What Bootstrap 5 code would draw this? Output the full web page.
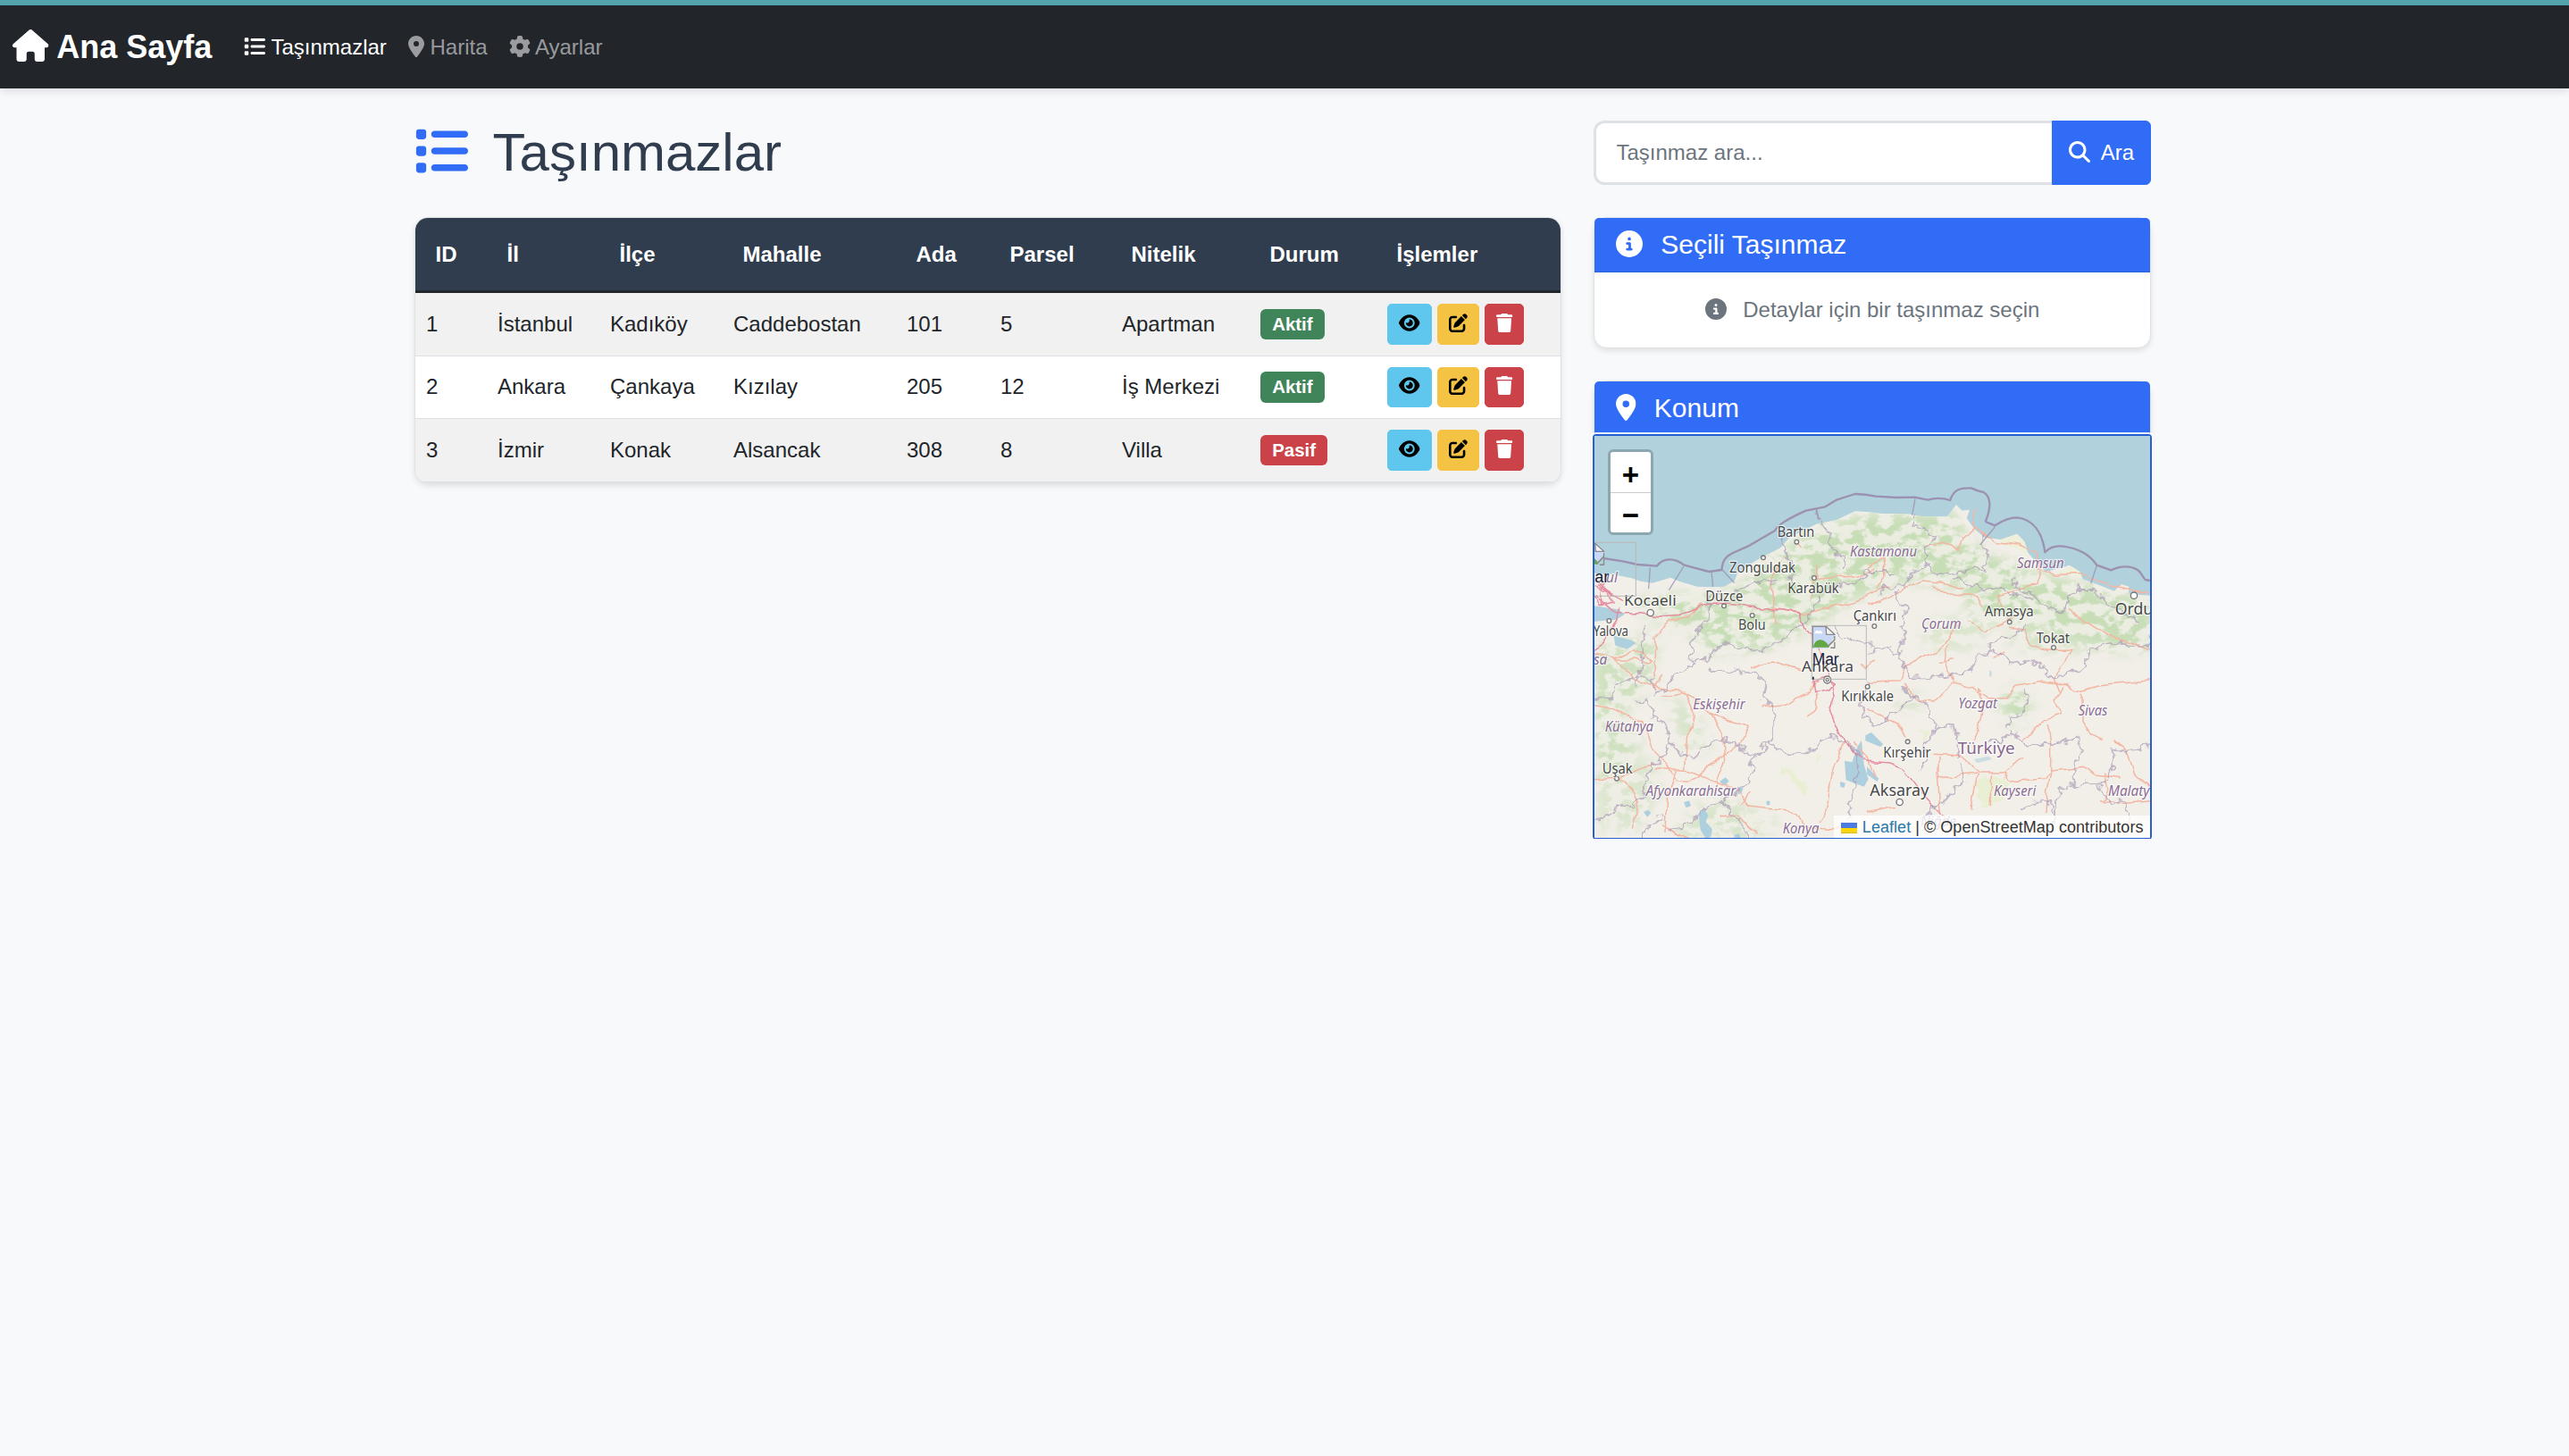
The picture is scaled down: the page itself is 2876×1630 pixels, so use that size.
<!DOCTYPE html>
<html lang="tr">
<head>
<meta charset="utf-8">
<meta name="viewport" content="width=device-width, initial-scale=1">
<title>Taşınmazlar</title>
<link href="https://cdn.jsdelivr.net/npm/bootstrap@5.3.0/dist/css/bootstrap.min.css" rel="stylesheet">
<style>
  html { font-size: 24px; }
  body { font-family: "Liberation Sans", Arial, sans-serif; background: #f8f9fb; border-top: 6px solid #52a5ad; position: relative; }
  body::before { content: ""; position: absolute; top: -2px; left: 0; right: 0; height: 2px; background: #70bcbf; }
  .fa-ico { height: 1em; width: auto; vertical-align: -.125em; fill: currentColor; overflow: visible; }
  .topnav { background: #22252a; box-shadow: 0 3px 9px rgba(40,20,60,.13); padding: 12px 0; }
  .topnav .container-fluid { padding-left: 14px; }
  .topnav .navbar-brand { font-size: 36px; font-weight: 700; margin-right: 24px; }
  .topnav .nav-link { padding: 12px; }
  .page-wrap { max-width: 1980px; padding: 0 18px; margin-left: 446px; margin-right: auto; }
  .page-head { color: #303d4e; font-size: 60px; line-height: 72px; }
  .brand-blue { color: #306cf6; }
  .panel { border: 1px solid #e0e1e3; border-radius: 15px; box-shadow: 0 3px 6px rgba(0,0,0,.1); }
  .panel-head { background: #306cf6; color: #fff; padding: 12px 24px; border-bottom: 1px solid #2a5fd9; border-radius: 5px 5px 0 0 !important; }
  .panel-head h5 { font-size: 30px; line-height: 36px; }
  .panel-note { color: #6c757d; line-height: 36px; }
  .list-panel { overflow: hidden; }
  .estate { --bs-table-striped-bg: #f1f1f1; --bs-table-bg: #fff; table-layout: fixed; color: #212529; }
  .estate th { background: #303d4e; color: #fff; padding: 22.5px; border-bottom: 3px solid #22252a; white-space: nowrap; }
  .estate td { padding: 12px; vertical-align: middle; height: 70.4px; border-bottom: 1px solid #dcdfe5; white-space: nowrap; background: #fff; }
  .estate tr:nth-child(odd) td { background: #f1f1f1; box-shadow: none; }
  .state { font-size: 20.4px; padding: .35em .65em; border-radius: 6px; vertical-align: middle; position: relative; top: -1px; }
  .bg-ok { background: #40855a; } .bg-off { background: #cb4349; }
  .act { font-size: 21px; line-height: 31.5px; padding: 6px 12px; border: 1px solid; border-radius: 5px; }
  .act svg { position: relative; top: -1px; }
  .act-view { background: #5fc7ed; border-color: #5fc7ed; color: #000; }
  .act-edit { background: #f5c344; border-color: #f5c344; color: #000; }
  .act-del { background: #cb4349; border-color: #cb4349; color: #fff; }
  .find-box { border: 3px solid #dee2e6; border-radius: 12px; padding: 15px 22.5px; line-height: 36px; height: 72px; border-right: 0; }
  .find-box::placeholder { color: #6c757d; }
  .find-btn { background: #306cf6; color: #fff; border: 1px solid #306cf6; padding: 0 18px; border-radius: 6px; }
  .map-view { height: 450px; position: relative; z-index: 1; border-radius: 2px; box-shadow: 0 0 0 2px #255fd0, 0 0 0 4px rgba(255,255,255,.9); }
  .map-view > svg { width: 100%; height: 100%; display: block; }
  .zoom-ctl { position: absolute; left: 15px; top: 15px; width: 51px; border: 3px solid rgba(0,0,0,.2); border-radius: 6px; background-clip: padding-box; }
  .zoom-ctl a { display: block; height: 45px; background: #fff; color: #000; text-decoration: none; text-align: center; font: bold 33px/51px "Liberation Sans", sans-serif; border-radius: 3px 3px 0 0; background-clip: padding-box; }
  .zoom-ctl a:last-child { border-radius: 0 0 3px 3px; border-top: 1px solid #ccc; line-height: 49px; }
  .map-credit { position: absolute; right: 0; bottom: 0; height: 25px; padding: 0 7.5px; font-size: 18px; line-height: 26px; letter-spacing: .04px; background: rgba(255,255,255,.8); color: #333; white-space: nowrap; }
  .map-credit a { color: #2a78a8; text-decoration: none; }
  .map-credit svg { width: 18px; height: 12px; margin-right: 6px; vertical-align: -1px; }
  .lb text { font-family: "Noto Sans", "Open Sans", sans-serif; fill: #484848; stroke: #fff; stroke-opacity: .7; stroke-width: 7; stroke-linejoin: round; paint-order: stroke; }
  .lb .pv { font-style: italic; fill: #8a6d94; }
  .rd { fill: none; stroke: #f3b6a2; stroke-width: 4.5; stroke-linejoin: round; }
  .mw { fill: none; stroke: #e58c9e; stroke-width: 4.5; stroke-linejoin: round; }
  .bd { fill: none; stroke: #a999b5; stroke-opacity: .68; stroke-width: 5.5; stroke-linejoin: round; }
  .sb { fill: none; stroke: #9c91b1; stroke-width: 7; stroke-linejoin: round; }
  .sd { fill: none; stroke: #9c91b1; stroke-width: 4; opacity: .8; }
  .lk { fill: #aed0de; }
  .tn circle { fill: #fff; stroke: #777; stroke-width: 4; }
</style>
<script src="https://cdn.jsdelivr.net/npm/bootstrap@5.3.0/dist/js/bootstrap.bundle.min.js"></script>
</head>
<body>
<svg width="0" height="0" class="position-absolute" aria-hidden="true">
  <symbol id="i-home" viewBox="0 0 576 512"><path d="M575.8 255.5c0 18-15 32.1-32 32.1h-32l.7 160.2c0 2.7-.2 5.4-.5 8.1V472c0 22.1-17.9 40-40 40H456c-1.100 0-2.200 0-3.300-.1c-1.400 .1-2.800 .1-4.200 .1H416 392c-22.100 0-40-17.900-40-40V448 384c0-17.700-14.300-32-32-32H256c-17.700 0-32 14.300-32 32v64 24c0 22.100-17.900 40-40 40H160 128.100c-1.500 0-3-.1-4.500-.2c-1.200 .1-2.400 .2-3.600 .2H104c-22.100 0-40-17.900-40-40V360c0-.9 0-1.900 .1-2.800V287.600H32c-18 0-32-14-32-32.100c0-9 3-17 10-24L266.400 8c7-7 15-8 22-8s15 2 21 7L564.800 231.500c8 7 12 15 11 24z"/></symbol>
  <symbol id="i-list" viewBox="0 0 512 512"><path d="M40 48C26.700 48 16 58.700 16 72v48c0 13.300 10.700 24 24 24H88c13.300 0 24-10.700 24-24V72c0-13.300-10.700-24-24-24H40zM192 64c-17.700 0-32 14.300-32 32s14.300 32 32 32H480c17.700 0 32-14.300 32-32s-14.300-32-32-32H192zm0 160c-17.700 0-32 14.300-32 32s14.300 32 32 32H480c17.700 0 32-14.300 32-32s-14.300-32-32-32H192zm0 160c-17.700 0-32 14.300-32 32s14.300 32 32 32H480c17.700 0 32-14.300 32-32s-14.300-32-32-32H192zM16 232v48c0 13.300 10.700 24 24 24H88c13.300 0 24-10.700 24-24V232c0-13.300-10.700-24-24-24H40c-13.300 0-24 10.700-24 24zM40 368c-13.300 0-24 10.700-24 24v48c0 13.300 10.700 24 24 24H88c13.300 0 24-10.700 24-24V392c0-13.300-10.700-24-24-24H40z"/></symbol>
  <symbol id="i-pin" viewBox="0 0 384 512"><path d="M215.700 499.200C267 435 384 279.400 384 192C384 86 298 0 192 0S0 86 0 192c0 87.400 117 243 168.300 307.200c12.300 15.300 35.100 15.300 47.400 0zM192 128a64 64 0 1 1 0 128 64 64 0 1 1 0-128z"/></symbol>
  <symbol id="i-gear" viewBox="0 0 512 512"><path d="M495.900 166.600c3.200 8.700 .5 18.400-6.400 24.600l-43.300 39.400c1.100 8.300 1.700 16.800 1.700 25.400s-.6 17.100-1.700 25.400l43.300 39.400c6.900 6.200 9.600 15.900 6.400 24.600c-4.400 11.900-9.700 23.300-15.800 34.300l-4.700 8.100c-6.600 11-14 21.400-22.100 31.200c-5.900 7.200-15.700 9.600-24.500 6.800l-55.700-17.700c-13.400 10.300-28.200 18.900-44 25.400l-12.500 57.100c-2 9.100-9 16.300-18.200 17.800c-13.800 2.300-28 3.500-42.500 3.500s-28.700-1.200-42.500-3.500c-9.200-1.500-16.200-8.700-18.200-17.800l-12.500-57.100c-15.800-6.500-30.600-15.100-44-25.400L83.100 425.900c-8.800 2.800-18.600 .3-24.500-6.800c-8.100-9.800-15.500-20.200-22.100-31.200l-4.700-8.100c-6.100-11-11.400-22.400-15.800-34.300c-3.200-8.700-.5-18.400 6.400-24.600l43.300-39.400C64.600 273.100 64 264.600 64 256s.6-17.100 1.700-25.400L22.400 191.200c-6.900-6.200-9.600-15.900-6.400-24.600c4.400-11.900 9.700-23.300 15.800-34.300l4.700-8.100c6.600-11 14-21.400 22.100-31.200c5.900-7.200 15.700-9.600 24.500-6.800l55.700 17.700c13.400-10.300 28.200-18.900 44-25.400l12.500-57.100c2-9.100 9-16.300 18.200-17.800C227.300 1.200 241.500 0 256 0s28.700 1.200 42.500 3.500c9.200 1.500 16.200 8.700 18.200 17.800l12.500 57.100c15.800 6.500 30.600 15.100 44 25.400l55.700-17.700c8.800-2.800 18.600-.3 24.500 6.800c8.100 9.800 15.500 20.200 22.100 31.200l4.700 8.100c6.100 11 11.400 22.400 15.800 34.300zM256 336a80 80 0 1 0 0-160 80 80 0 1 0 0 160z"/></symbol>
  <symbol id="i-find" viewBox="0 0 512 512"><path d="M416 208c0 45.900-14.900 88.300-40 122.700L502.600 457.400c12.500 12.500 12.500 32.800 0 45.300s-32.800 12.500-45.300 0L330.700 376c-34.400 25.200-76.800 40-122.700 40C93.100 416 0 322.900 0 208S93.100 0 208 0S416 93.100 416 208zM208 352a144 144 0 1 0 0-288 144 144 0 1 0 0 288z"/></symbol>
  <symbol id="i-info" viewBox="0 0 512 512"><path d="M256 512A256 256 0 1 0 256 0a256 256 0 1 0 0 512zM216 336h24V272H216c-13.300 0-24-10.700-24-24s10.700-24 24-24h48c13.300 0 24 10.700 24 24v88h8c13.300 0 24 10.700 24 24s-10.700 24-24 24H216c-13.300 0-24-10.700-24-24s10.700-24 24-24zm40-208a32 32 0 1 1 0 64 32 32 0 1 1 0-64z"/></symbol>
  <symbol id="i-eye" viewBox="0 0 576 512"><path d="M288 32c-80.800 0-145.500 36.800-192.600 80.600C48.600 156 17.300 208 2.500 243.700c-3.300 7.900-3.300 16.700 0 24.600C17.300 304 48.600 356 95.400 399.400C142.500 443.200 207.200 480 288 480s145.500-36.800 192.600-80.600c46.800-43.500 78.100-95.400 93-131.100c3.300-7.900 3.300-16.700 0-24.600c-14.900-35.700-46.200-87.700-93-131.100C433.500 68.800 368.800 32 288 32zM144 256a144 144 0 1 1 288 0 144 144 0 1 1 -288 0zm144-64c0 35.300-28.700 64-64 64c-7.100 0-13.900-1.200-20.300-3.300c-5.500-1.800-11.900 1.600-11.700 7.400c.3 6.900 1.300 13.800 3.200 20.700c13.700 51.200 66.400 81.600 117.600 67.900s81.600-66.400 67.900-117.600c-11.100-41.500-47.800-69.400-88.600-71.100c-5.800-.2-9.200 6.100-7.400 11.700c2.100 6.400 3.300 13.200 3.300 20.300z"/></symbol>
  <symbol id="i-edit" viewBox="0 0 512 512"><path d="M471.600 21.700c-21.900-21.900-57.300-21.900-79.200 0L362.300 51.700l97.900 97.900 30.100-30.100c21.900-21.900 21.900-57.300 0-79.200L471.600 21.700zm-299.200 220c-6.100 6.100-10.800 13.600-13.500 21.900l-29.600 88.800c-2.900 8.600-.6 18.100 5.800 24.600s15.900 8.700 24.600 5.800l88.800-29.600c8.200-2.700 15.700-7.400 21.900-13.500L437.700 172.300 339.700 74.300 172.400 241.700zM96 64C43 64 0 107 0 160V416c0 53 43 96 96 96H352c53 0 96-43 96-96V320c0-17.700-14.300-32-32-32s-32 14.300-32 32v96c0 17.700-14.300 32-32 32H96c-17.700 0-32-14.300-32-32V160c0-17.700 14.300-32 32-32h96c17.700 0 32-14.300 32-32s-14.300-32-32-32H96z"/></symbol>
  <symbol id="i-trash" viewBox="0 0 448 512"><path d="M135.200 17.700L128 32H32C14.300 32 0 46.300 0 64S14.300 96 32 96H416c17.700 0 32-14.300 32-32s-14.300-32-32-32H320l-7.200-14.300C307.400 6.800 296.300 0 284.200 0H163.800c-12.100 0-23.200 6.800-28.600 17.700zM416 128H32L53.200 467c1.600 25.300 22.600 45 47.900 45H346.900c25.300 0 46.300-19.700 47.900-45L416 128z"/></symbol>
  <symbol id="i-broken" viewBox="0 0 78 76"><path d="M1 1h48l28 28v10L66 47v6L54 75H1z" fill="#c9d8f5"/><path d="M2 74V2h46v26h28" fill="none" stroke="#8a8a8a" stroke-width="4"/><path d="M46 2l30 27H48z" fill="#f4f4f4" stroke="#8a8a8a" stroke-width="4"/><path d="M8 26c0-12 12-12 14-8 8-5 12 2 12 8z" fill="#fff"/><path d="M4 72c5-34 40-34 54 0z" fill="#62a744"/><path d="M76 34v12l-22 22M76 54v20H62" fill="none" stroke="#8a8a8a" stroke-width="5"/></symbol>
</svg>

<nav class="navbar navbar-expand navbar-dark topnav">
  <div class="container-fluid">
    <a class="navbar-brand" href="#"><svg class="fa-ico" viewBox="0 0 576 512"><use href="#i-home"/></svg> Ana Sayfa</a>
    <ul class="navbar-nav me-auto">
      <li class="nav-item"><a class="nav-link active" href="#"><svg class="fa-ico" viewBox="0 0 512 512"><use href="#i-list"/></svg> Taşınmazlar</a></li>
      <li class="nav-item"><a class="nav-link" href="#"><svg class="fa-ico" viewBox="0 0 384 512"><use href="#i-pin"/></svg> Harita</a></li>
      <li class="nav-item"><a class="nav-link" href="#"><svg class="fa-ico" viewBox="0 0 512 512"><use href="#i-gear"/></svg> Ayarlar</a></li>
    </ul>
  </div>
</nav>

<main class="page-wrap mt-4">
  <div class="row mb-4">
    <div class="col-8">
      <h1 class="page-head mb-0"><svg class="fa-ico brand-blue me-2" viewBox="0 0 512 512"><use href="#i-list"/></svg> Taşınmazlar</h1>
    </div>
    <div class="col-4">
      <div class="input-group">
        <input type="text" class="form-control find-box" placeholder="Taşınmaz ara...">
        <button class="btn find-btn" type="button"><svg class="fa-ico me-1" viewBox="0 0 512 512"><use href="#i-find"/></svg> Ara</button>
      </div>
    </div>
  </div>

  <div class="row">
    <div class="col-8">
      <div class="card panel list-panel">
        <table class="table table-striped estate mb-0">
          <colgroup><col style="width:80px"><col style="width:126px"><col style="width:138px"><col style="width:194px"><col style="width:105px"><col style="width:136px"><col style="width:155px"><col style="width:142px"><col></colgroup>
          <thead>
            <tr><th>ID</th><th>İl</th><th>İlçe</th><th>Mahalle</th><th>Ada</th><th>Parsel</th><th>Nitelik</th><th>Durum</th><th>İşlemler</th></tr>
          </thead>
          <tbody>
            <tr>
              <td>1</td><td>İstanbul</td><td>Kadıköy</td><td>Caddebostan</td><td>101</td><td>5</td><td>Apartman</td>
              <td><span class="badge state bg-ok">Aktif</span></td>
              <td><div class="d-flex gap-1"><button class="btn act act-view"><svg class="fa-ico" viewBox="0 0 576 512"><use href="#i-eye"/></svg></button><button class="btn act act-edit"><svg class="fa-ico" viewBox="0 0 512 512"><use href="#i-edit"/></svg></button><button class="btn act act-del"><svg class="fa-ico" viewBox="0 0 448 512"><use href="#i-trash"/></svg></button></div></td>
            </tr>
            <tr>
              <td>2</td><td>Ankara</td><td>Çankaya</td><td>Kızılay</td><td>205</td><td>12</td><td>İş Merkezi</td>
              <td><span class="badge state bg-ok">Aktif</span></td>
              <td><div class="d-flex gap-1"><button class="btn act act-view"><svg class="fa-ico" viewBox="0 0 576 512"><use href="#i-eye"/></svg></button><button class="btn act act-edit"><svg class="fa-ico" viewBox="0 0 512 512"><use href="#i-edit"/></svg></button><button class="btn act act-del"><svg class="fa-ico" viewBox="0 0 448 512"><use href="#i-trash"/></svg></button></div></td>
            </tr>
            <tr>
              <td>3</td><td>İzmir</td><td>Konak</td><td>Alsancak</td><td>308</td><td>8</td><td>Villa</td>
              <td><span class="badge state bg-off">Pasif</span></td>
              <td><div class="d-flex gap-1"><button class="btn act act-view"><svg class="fa-ico" viewBox="0 0 576 512"><use href="#i-eye"/></svg></button><button class="btn act act-edit"><svg class="fa-ico" viewBox="0 0 512 512"><use href="#i-edit"/></svg></button><button class="btn act act-del"><svg class="fa-ico" viewBox="0 0 448 512"><use href="#i-trash"/></svg></button></div></td>
            </tr>
          </tbody>
        </table>
      </div>
    </div>

    <div class="col-4">
      <div class="card panel mb-4">
        <div class="card-header panel-head"><h5 class="mb-0"><svg class="fa-ico me-2" viewBox="0 0 512 512"><use href="#i-info"/></svg> Seçili Taşınmaz</h5></div>
        <div class="card-body px-3 py-0">
          <p class="text-center my-3 py-0 panel-note"><svg class="fa-ico me-2" viewBox="0 0 512 512"><use href="#i-info"/></svg> Detaylar için bir taşınmaz seçin</p>
        </div>
      </div>

      <div class="card panel">
        <div class="card-header panel-head"><h5 class="mb-0"><svg class="fa-ico me-2" viewBox="0 0 384 512"><use href="#i-pin"/></svg> Konum</h5></div>
        <div class="map-view">
          <svg viewBox="45 234 1866 1350" preserveAspectRatio="none">
            <defs>
              <filter id="mottle" x="0" y="0" width="100%" height="100%" color-interpolation-filters="sRGB">
                <feTurbulence type="fractalNoise" baseFrequency=".022 .03" numOctaves="5" seed="11"/>
                <feColorMatrix values="0 0 0 0 .775  0 0 0 0 .865  0 0 0 0 .71  6 0 0 0 -2.6"/>
              </filter>
              <filter id="wiggle" filterUnits="userSpaceOnUse" x="0" y="200" width="2000" height="1450">
                <feTurbulence type="fractalNoise" baseFrequency=".035" numOctaves="2" seed="4" result="n"/>
                <feDisplacementMap in="SourceGraphic" in2="n" scale="42" xChannelSelector="R" yChannelSelector="G"/>
              </filter>
              <filter id="wobble" filterUnits="userSpaceOnUse" x="0" y="200" width="2000" height="1450">
                <feTurbulence type="fractalNoise" baseFrequency=".018" numOctaves="2" seed="9" result="n"/>
                <feDisplacementMap in="SourceGraphic" in2="n" scale="26" xChannelSelector="R" yChannelSelector="G"/>
              </filter>
              <filter id="soft" x="-20%" y="-20%" width="140%" height="140%"><feGaussianBlur stdDeviation="22"/></filter>
              <mask id="woods" maskUnits="userSpaceOnUse" x="0" y="200" width="2000" height="1500">
                <g fill="#fff" filter="url(#soft)">
                  <path d="M200 780L520 750 640 640 800 540 950 495 1260 490 1300 590 1480 680 1720 740 1920 790 1920 960 1740 930 1560 870 1480 850 1330 860 1270 740 1080 720 900 790 800 860 640 950 420 960 380 900 200 830z"/>
                  <path d="M40 940L260 900 240 1060 200 1100 120 1200 210 1260 100 1400 40 1340z" fill-opacity=".8"/>
                  <path d="M40 1320L240 1320 280 1400 200 1560 60 1560z" fill-opacity=".5"/>
                  <path d="M280 1080L400 1180 440 1300 330 1270z" fill-opacity=".6"/>
                  <path d="M500 1450L680 1540 560 1600 300 1600 380 1480z" fill-opacity=".6"/>
                  <ellipse cx="1460" cy="1140" rx="50" ry="60"/><ellipse cx="1100" cy="1125" rx="50" ry="18"/>
                  <path d="M1150 860L1320 830 1380 900 1300 960 1150 950z" fill-opacity=".5"/>
                  <path d="M1480 830L1700 860 1860 960 1600 960 1430 940z" fill-opacity=".7"/>
                </g>
              </mask>
              <clipPath id="coast"><path id="shore" d="M45 695l65 5 60 12 30 10 40 6 60-18 30 12 60 18 50 2 40-2 35-18 10-27 35-25 50-30 60-30 30-35 90-45 70-15 60-28 50 3 40 5 80 0 60 10 80 0 30-40 20 20 25-3-10 28 25 35 35 30 55 7 55-19 25 27 10 35 30 35 30 30 40-10 40-12 35 22 10 25 55 20 50 20 25-23 25 8v25l72 5V1600H45z"/></clipPath>
            </defs>
            <rect x="45" y="234" width="1866" height="1350" fill="#b1d1dc"/>
            <use href="#shore" fill="#f2efe9"/>
            <g clip-path="url(#coast)">
              <g mask="url(#woods)"><rect x="45" y="470" width="1866" height="1120" fill="#dfead3" fill-opacity=".35"/><rect x="45" y="470" width="1866" height="1120" filter="url(#mottle)"/></g>
              <path d="M1410 582l55-19 25 27 10 50-30-25-60-20zM1610 690l50-22 22 18v25z" fill="#eff0da"/>
              <g fill="#e4efc4" opacity=".6" filter="url(#wiggle)"><path d="M660 1340l50 20 50 55-15 20-40-45zM780 1300l30 10-20 25zM1140 1220l30-8-5 35-20 8zM1320 1410l60-40 60 30-20 50-70 40z"/></g>
            </g>
            <g class="lk">
              <path d="M45 805l80 12 22 16-30 18-72 6zM110 905l60 15 15 10-30 20-40-12zM885 1325l25 5 20-55 12-18 8 80 15 50-15 25-60-22zM870 1395l18 5-5 16-12-4zM395 1500l20-12 12 20-8 22 22 25-5 25-15 8-20-30zM465 1395l20-14 12 12-14 16zM345 1465l18-6 6 18-16 6zM210 1498l15-8 10 10-12 14zM955 1240l20-10 40 40-10 8-50-20zM525 1420l20-8-6 22-12 4zM515 1575l15-5 8 18h-20zM622 1460l12 0v14h-10zM960 1345l40 40-6 10-34-25z"/>
              <path d="M1320 1320l50-10 10 10-50 12zM1372 1020l8 5-2 20-7-5z" opacity=".6"/>
            </g>
            <g filter="url(#wobble)">
            <g class="rd">
              <path d="M45 965l65 16 60-20 40-2 26 30-10 10-46-15-74 0M110 981l35 30 30 40 50 20 100 15 70 35 30 40 45 20 95 25-30 60-40 30-70 50-55 50-50-2-30-60-50-50-30-90-120-50-60-10-70 5M270 1108l80-12 25 45 5 65-25 40-5 110M440 1170l40 90 5 60-25 70-5 50M610 1145l75-5 35-25 50-20 20-40M245 1085l30-50"/>
              <path d="M45 1388l90-5 80-40 30-5M245 1353l110 0 120 55 40 10 50 55 130 15 40 30 15 30 80 10 50-15M320 1355l-30 80-5 130M130 1385l45 35 15 50-15 80M360 1590l-50-30-40-20M470 1515l50-5 70 60M545 1470l20-45M760 1183l35-40-5-40M885 1255l-40 100-15 100-25 80M915 1260l50 60 25 60"/>
              <path d="M680 640l-40 70 10 110 5 50M795 670v45l130-10 60-25M780 715l-10 70M740 1020l-30-10-70-20-65 30M245 905l10 40-10 50 5 50M250 905l50-50 60-15 50-40M725 590l15 20M940 1000l20 10 30-20M650 810l100 20 90-20 60-10 85-40 50-20"/>
              <path d="M960 680l50-40 10 70-30 40M1160 600l60-8 45 30 15-40 40-40 0-65M1290 750l-60-20-80-10-90 40-60 30-40 5M1320 540l70 50 80 10 60 30 10 50-10 50-60 20-70 20 10 40M1530 680l60 20 90-2 70 30 90 20 70 15M1180 738l60 30 90 5 20 30M960 1060l110-5 20-50 110-50 40-60 40-30M1230 930l-8 60 30 70M1250 990l-50 4M1300 860l60 30 30-20 70-30 40-20M1080 1070l50 50 60 5 60-60 70 15 50 35 60 0 30-40 120-20 50 15 30 25 70-20 90-10 90-10M1350 1090l-10-10 3 80-10 60-20 60M1380 975l45-10M1440 880l50 5 20 50 60 20 80 0-60 90 20 50M1640 820l90 60 110 50 80 25M1620 1075l-25 50 20 40-60 20-30 30-40 40M1680 1100l0 90 25 40 40 20M1570 1200l10 60 0 90-15 80-5 70M1175 1300l100 5 60 60 80 0 70-50M1200 1310v60l10 130M1200 1385l50-10 80-10 90 0 15 30 120-10 30-30 100-10 50 30 80 10M1330 1370l-20 120M1375 1370v100M1785 1260l50 30 20 70 60 60M1760 1370l10 50-20 50M960 1150l100 50 30 40M960 1500l90-20M1740 1460l60 10 110-10"/>
            </g>
            <g class="mw">
              <path d="M50 720l35 30 20 40-40 10-20-30M60 740l50 30 30 15-90-40M75 730l-5 70M50 770l70 60 80 0 60 10 70-5 60-20 60-20 60 5 90 15 80 0 50 10 20 50 30 40 30 60 20 50 20 80-15 50 40 90 40 50 50 35 70 5 50 20 60 80 60 60 50 80 30 60M45 955l30-20 25-50 20-30 5-50M780 1055l40-10 30 20-20 25-45 10z"/>
            </g>
            </g>
            <g class="bd" filter="url(#wiggle)">
              <path d="M215 870l0 50-15 50 10 30-20 50 0 25M380 910l-15 60 20 30-30 20-40 15-25 55-40 5-15-40-65-10-50 30-20 40-60 0M435 770l-8 80-40 50M795 485l15 50 30 30-5 50 50 30 0 30M670 560l5 50 30 40 10 30-10 50M380 985l45 5 20-40 40-15 80 20 60-10 60-30 10-30 60-20 30-60 20-40 60-30 60-5 40-40 80 0M425 1015l70 10 60 0 50 20 20 30-20 30 30 30 15 40-5 60-20 50-30 20-30-5-60-40-50-10-20 20-40 20-30 25-40-20-30-50-10-40-40-30-20-50-50-5M605 1280l30-20 30 35 30 10 50-5 40-20 30-30 40-5 30 20 40 30 5 60-10 50-20 60 10 20-10 50M590 1300l-20 50-5 50-40 30-30 10-20 20 50 60 35 50-5 40M290 1570l80-40 30-30 40-30 60-20M310 1260l-60 80-30 30-10 60-30 50-50-5-40 30-45 20M200 1590l30-50 40-30M850 870l30 40 50 20 60 10M960 1060l-20 60 10 60 50 30 40-40 50-40 40-20M450 760l60 10 60-40 90-10"/>
              <path d="M1120 500l0 40 40 10 25 25-30 50 10 50 40 30 70-10 40-20 40 10 10-60-20-30 10-30M1170 670l-60 20-20 50-60 0-30 30M1050 760l40 50-10 70 10 30-25 60M1680 740l-40 30-20 60-50-10-60-60-50-15-10-40M1250 710l60 30 60 10 60 0 30 20 50 10M960 960l70-15 30 20 20 30 30 50 60 0 70-10 70-10 30-60 60-5 50 30 30 10 60-5 30 50 70-15 50-20 20-60 70-25 60 10 60 10 20-50 40-50M1360 970l20-40 50-20 50-20 20-30M1660 750l60 0 40 50 60 30 60 30M1080 1080l30 30 50 20 10 50 30 30 50-10 20 70-10 50M1490 1080l10 50-15 30-50 30-5 30M1200 1210l-40 60-5 60-20 30M1440 1220l50 50 60 5 70-15 40-10 20 30-10 40-20 40 10 40-10 10M1365 1260l40 0 40-30M1265 1330l20 60-50 60-60 30-20 50M1620 1415l60-10 60 0 50-50-10-70 50 10 30 0 20-20 45-3M1740 1410l20 40 60 20 20 30-5 60M1470 1500l50-40 50 0 20 50-20 50M1620 1415l-30 50 0 70"/>
            </g>
            <g class="sd"><path d="M232 677l-5 70M345 672l-50 80M438 690l5 50M475 684l40 44M790 481l10 35M670 560l5 25M1122 445l-10 55M1390 540l-50 60M1732 670l-20 60"/></g>
            <g class="sb"><path d="M75 645L140 655 190 666 255 671C275 642 315 643 345 667L380 677 430 690 472 684C476 650 485 640 510 627L560 605 650 553C665 530 690 515 755 485L820 472 860 448 920 429Q955 429 990 437L1060 441 1120 440 1165 449Q1200 438 1240 450C1250 415 1270 408 1310 409Q1340 422 1350 422C1375 435 1380 470 1358 522M1305 409"/></g>
            <g class="sb"><path d="M1310 420"/></g>
            <g class="tn">
              <circle cx="724" cy="590" r="7"/><circle cx="612" cy="643" r="7"/><circle cx="783" cy="711" r="7"/><circle cx="480" cy="805" r="7"/><circle cx="233" cy="828" r="11"/><circle cx="94" cy="855" r="7"/><circle cx="575" cy="837" r="7"/><circle cx="985" cy="873" r="7"/><circle cx="962" cy="1076" r="7"/><circle cx="827" cy="1053" r="12"/><circle cx="827" cy="1053" r="5"/><circle cx="120" cy="1385" r="7"/><circle cx="1097" cy="1261" r="7"/><circle cx="1070" cy="1464" r="11"/><circle cx="1439" cy="859" r="7"/><circle cx="1587" cy="945" r="7"/><circle cx="1857" cy="770" r="11"/>
            </g>
            <g class="sb"><path d="M1358 522L1390 535Q1430 508 1465 508C1520 515 1550 560 1558 625Q1580 600 1620 605C1670 612 1710 635 1732 668L1780 685Q1810 670 1840 674C1880 680 1880 700 1895 717L1911 720"/></g>
            <g class="lb" font-size="46">
              <text x="659" y="572" textLength="125" lengthAdjust="spacingAndGlyphs">Bartın</text>
              <text x="498" y="694" textLength="222" lengthAdjust="spacingAndGlyphs">Zonguldak</text>
              <text x="694" y="763" textLength="172" lengthAdjust="spacingAndGlyphs">Karabük</text>
              <text x="418" y="790" textLength="126" lengthAdjust="spacingAndGlyphs">Düzce</text>
              <text x="144" y="804" font-size="51" textLength="176" lengthAdjust="spacingAndGlyphs">Kocaeli</text>
              <text x="41" y="905" textLength="118" lengthAdjust="spacingAndGlyphs">Yalova</text>
              <text x="528" y="886" textLength="92" lengthAdjust="spacingAndGlyphs">Bolu</text>
              <text x="914" y="855" textLength="145" lengthAdjust="spacingAndGlyphs">Çankırı</text>
              <text x="741" y="1026" textLength="174" lengthAdjust="spacingAndGlyphs">Ankara</text>
              <text x="874" y="1125" textLength="176" lengthAdjust="spacingAndGlyphs">Kırıkkale</text>
              <text x="71" y="1368" textLength="102" lengthAdjust="spacingAndGlyphs">Uşak</text>
              <text x="1015" y="1313" textLength="160" lengthAdjust="spacingAndGlyphs">Kırşehir</text>
              <text x="970" y="1442" font-size="52" textLength="198" lengthAdjust="spacingAndGlyphs">Aksaray</text>
              <text x="1355" y="840" textLength="165" lengthAdjust="spacingAndGlyphs">Amasya</text>
              <text x="1529" y="929" textLength="112" lengthAdjust="spacingAndGlyphs">Tokat</text>
              <text x="1793" y="834" font-size="53">Ordu</text>
              <text class="pv" x="903" y="638" textLength="225" lengthAdjust="spacingAndGlyphs">Kastamonu</text>
              <text class="pv" x="1464" y="678" textLength="158" lengthAdjust="spacingAndGlyphs">Samsun</text>
              <text class="pv" x="84" y="725">ul</text>
              <text class="pv" x="42" y="1001">sa</text>
              <text class="pv" x="376" y="1153" textLength="175" lengthAdjust="spacingAndGlyphs">Eskişehir</text>
              <text class="pv" x="80" y="1228" textLength="163" lengthAdjust="spacingAndGlyphs">Kütahya</text>
              <text class="pv" x="218" y="1444" textLength="302" lengthAdjust="spacingAndGlyphs">Afyonkarahisar</text>
              <text class="pv" x="677" y="1569" textLength="122" lengthAdjust="spacingAndGlyphs">Konya</text>
              <text class="pv" x="1143" y="881" textLength="133" lengthAdjust="spacingAndGlyphs">Çorum</text>
              <text class="pv" x="1267" y="1150" textLength="131" lengthAdjust="spacingAndGlyphs">Yozgat</text>
              <text class="pv" x="1670" y="1173" textLength="98" lengthAdjust="spacingAndGlyphs">Sivas</text>
              <text class="pv" x="1386" y="1443" textLength="142" lengthAdjust="spacingAndGlyphs">Kayseri</text>
              <text class="pv" x="1770" y="1442">Malatya</text>
              <text class="pv" x="1140" y="1545">Niğde</text>
              <text x="1265" y="1303" font-size="53" textLength="192" lengthAdjust="spacingAndGlyphs" style="fill:#86658f">Türkiye</text>
            </g>
            <g fill="none" stroke="#b9b9b9" stroke-width="3"><path d="M45 592h139v180H45"/><rect x="775" y="871" width="183" height="180"/></g>
            <use href="#i-broken" x="1" y="593" width="78" height="76"/>
            <use href="#i-broken" x="776" y="872" width="78" height="76"/>
            <g font-family="Liberation Sans, sans-serif" font-size="54" fill="#16233b"><text x="776" y="1002" textLength="90" lengthAdjust="spacingAndGlyphs">Mar</text><text x="46" y="725">ar</text><rect x="777" y="1043" width="5" height="9"/></g>
          </svg>
          <div class="zoom-ctl"><a href="#">+</a><a href="#">−</a></div>
          <div class="map-credit"><a href="#"><svg viewBox="0 0 12 8"><path fill="#4c7be1" d="M0 0h12v4H0z"/><path fill="#ffd500" d="M0 4h12v3H0z"/><path fill="#e0bc00" d="M0 7h12v1H0z"/></svg>Leaflet</a> | © OpenStreetMap contributors</div>
        </div>
      </div>
    </div>
  </div>
</main>
</body>
</html>
